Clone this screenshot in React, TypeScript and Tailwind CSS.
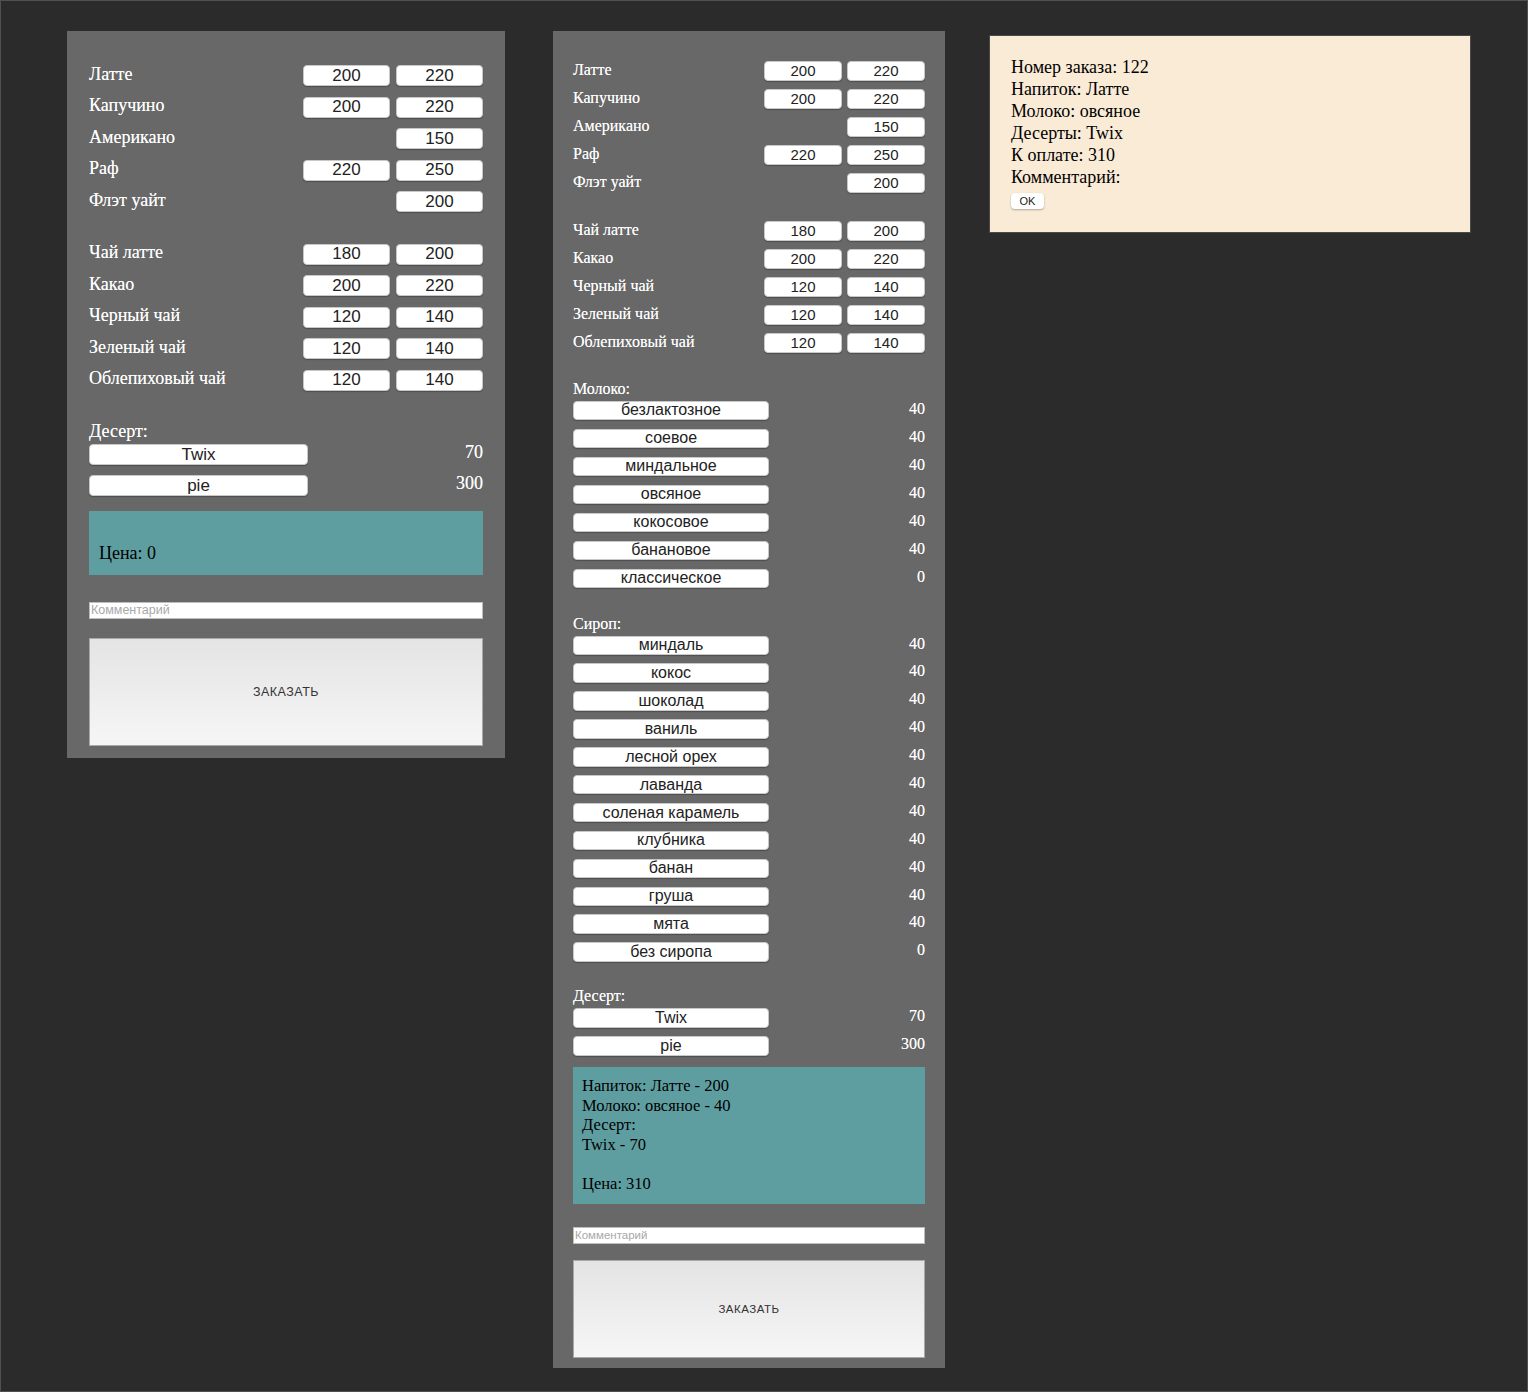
import React from "react";

const serif = "font-['Liberation_Serif',_'Times_New_Roman',_serif]";
const sans = "font-['Liberation_Sans',_Arial,_sans-serif]";
const glow = "[text-shadow:0_0_0.6px_rgba(255,255,255,0.7)]";

type Drink = { name: string; prices: number[] };

const coffee: Drink[] = [
  { name: "Латте", prices: [200, 220] },
  { name: "Капучино", prices: [200, 220] },
  { name: "Американо", prices: [150] },
  { name: "Раф", prices: [220, 250] },
  { name: "Флэт уайт", prices: [200] },
];

const tea: Drink[] = [
  { name: "Чай латте", prices: [180, 200] },
  { name: "Какао", prices: [200, 220] },
  { name: "Черный чай", prices: [120, 140] },
  { name: "Зеленый чай", prices: [120, 140] },
  { name: "Облепиховый чай", prices: [120, 140] },
];

const milk = [
  { name: "безлактозное", price: 40 },
  { name: "соевое", price: 40 },
  { name: "миндальное", price: 40 },
  { name: "овсяное", price: 40 },
  { name: "кокосовое", price: 40 },
  { name: "банановое", price: 40 },
  { name: "классическое", price: 0 },
];

const syrup = [
  { name: "миндаль", price: 40 },
  { name: "кокос", price: 40 },
  { name: "шоколад", price: 40 },
  { name: "ваниль", price: 40 },
  { name: "лесной орех", price: 40 },
  { name: "лаванда", price: 40 },
  { name: "соленая карамель", price: 40 },
  { name: "клубника", price: 40 },
  { name: "банан", price: 40 },
  { name: "груша", price: 40 },
  { name: "мята", price: 40 },
  { name: "без сиропа", price: 0 },
];

const desserts = [
  { name: "Twix", price: 70 },
  { name: "pie", price: 300 },
];

const pill =
  "bg-white rounded-[4px] border border-[#c8c8c8] shadow-[0_1px_1px_rgba(0,0,0,0.25)] text-[#222] flex items-center justify-center";

// big panel (left)
const BigRow = ({ d }: { d: Drink }) => (
  <div className="flex items-center h-[21px]">
    <span className={`flex-1 text-white text-[18px] leading-[21px] -mt-[3px] ${glow} ${serif}`}>{d.name}</span>
    <div className="flex gap-[6px]">
      {d.prices.length < 2 && <div className="w-[87px]" />}
      {d.prices.map((p, i) => (
        <button key={i} className={`${pill} w-[87px] h-[21px] text-[17px] ${sans}`}>
          {p}
        </button>
      ))}
    </div>
  </div>
);

const BigItem = ({ name, price }: { name: string; price: number }) => (
  <div className="flex items-start h-[21px]">
    <button className={`${pill} w-[219px] h-[21px] text-[17px] ${sans}`}>{name}</button>
    <span className={`flex-1 text-right text-white text-[18px] leading-[21px] -mt-[2px] ${glow} ${serif}`}>{price}</span>
  </div>
);

// small panel (middle)
const SmallRow = ({ d }: { d: Drink }) => (
  <div className="flex items-center h-[19.5px]">
    <span className={`flex-1 text-white text-[16px] leading-[18px] -mt-[2px] ${glow} ${serif}`}>{d.name}</span>
    <div className="flex gap-[5px]">
      {d.prices.length < 2 && <div className="w-[78px]" />}
      {d.prices.map((p, i) => (
        <button key={i} className={`${pill} w-[78px] h-[19.5px] text-[15px] ${sans}`}>
          {p}
        </button>
      ))}
    </div>
  </div>
);

const SmallItem = ({ name, price }: { name: string; price: number }) => (
  <div className="flex items-start h-[19.5px]">
    <button className={`${pill} w-[196px] h-[19.5px] text-[16px] ${sans}`}>{name}</button>
    <span className={`flex-1 text-right text-white text-[16px] leading-[18px] -mt-[1px] ${glow} ${serif}`}>{price}</span>
  </div>
);

const OrderButton = ({ h, size }: { h: string; size: string }) => (
  <button
    className={`w-full ${h} border border-[#a9a9a9] bg-gradient-to-b from-[#e4e4e4] to-[#f6f6f6] text-[#333] uppercase tracking-[0.5px] ${size} ${sans}`}
  >
    Заказать
  </button>
);

export default function App() {
  return (
    <div className="min-h-[1392px] bg-[#2b2b2b] border border-[#505050] flex items-start">
      {/* Panel 1 */}
      <div className="ml-[66px] mt-[30px] w-[438px] bg-[#686868] px-[22px] pt-[34px] pb-[12px]">
        <div className="flex flex-col gap-[10.5px]">
          {coffee.map((d) => (
            <BigRow key={d.name} d={d} />
          ))}
        </div>
        <div className="flex flex-col gap-[10.5px] mt-[31.5px]">
          {tea.map((d) => (
            <BigRow key={d.name} d={d} />
          ))}
        </div>
        <div className={`mt-[30px] mb-[2.5px] text-white text-[18px] leading-[21px] ${glow} ${serif}`}>Десерт:</div>
        <div className="flex flex-col gap-[10px]">
          {desserts.map((d) => (
            <BigItem key={d.name} name={d.name} price={d.price} />
          ))}
        </div>
        <div className={`mt-[15px] h-[64px] bg-[#5f9ea0] px-[10px] pt-[32px] text-black text-[18px] leading-[20px] ${serif}`}>
          Цена: 0
        </div>
        <input
          placeholder="Комментарий"
          className={`mt-[27px] w-full h-[17px] bg-white border border-[#bdbdbd] px-[1px] text-[12.5px] placeholder:text-[#a8a8a8] ${sans}`}
        />
        <div className="mt-[18px]">
          <OrderButton h="h-[108px]" size="text-[12.5px]" />
        </div>
      </div>

      {/* Panel 2 */}
      <div className="ml-[48px] mt-[30px] w-[392px] bg-[#686868] px-[20px] pt-[30px] pb-[10px]">
        <div className="flex flex-col gap-[8.5px]">
          {coffee.map((d) => (
            <SmallRow key={d.name} d={d} />
          ))}
        </div>
        <div className="flex flex-col gap-[8.5px] mt-[28.5px]">
          {tea.map((d) => (
            <SmallRow key={d.name} d={d} />
          ))}
        </div>
        <div className={`mt-[27px] mb-[3px] text-white text-[16px] leading-[18px] ${glow} ${serif}`}>Молоко:</div>
        <div className="flex flex-col gap-[8.5px]">
          {milk.map((m) => (
            <SmallItem key={m.name} name={m.name} price={m.price} />
          ))}
        </div>
        <div className={`mt-[26.5px] mb-[3px] text-white text-[16px] leading-[18px] ${glow} ${serif}`}>Сироп:</div>
        <div className="flex flex-col gap-[8.4px]">
          {syrup.map((m) => (
            <SmallItem key={m.name} name={m.name} price={m.price} />
          ))}
        </div>
        <div className={`mt-[25.5px] mb-[3px] text-white text-[16px] leading-[18px] ${glow} ${serif}`}>Десерт:</div>
        <div className="flex flex-col gap-[8.5px]">
          {desserts.map((d) => (
            <SmallItem key={d.name} name={d.name} price={d.price} />
          ))}
        </div>
        <div className={`mt-[11.5px] h-[136.5px] bg-[#5f9ea0] px-[9px] pt-[9px] text-black text-[16.5px] leading-[19.6px] ${serif}`}>
          <div>Напиток: Латте - 200</div>
          <div>Молоко: овсяное - 40</div>
          <div>Десерт:</div>
          <div>Twix - 70</div>
          <div className="h-[19.6px]" />
          <div>Цена: 310</div>
        </div>
        <input
          placeholder="Комментарий"
          className={`mt-[23.5px] w-full h-[17px] bg-white border border-[#bdbdbd] px-[1px] text-[11.5px] placeholder:text-[#a8a8a8] ${sans}`}
        />
        <div className="mt-[15px]">
          <OrderButton h="h-[98px]" size="text-[11.5px]" />
        </div>
      </div>

      {/* Panel 3 - order receipt */}
      <div
        className={`ml-[44px] mt-[34px] w-[482px] h-[198px] bg-[#faebd7] border border-[#4a4a4a] pl-[21px] pt-[20px] text-black text-[18px] leading-[22px] ${serif}`}
      >
        <div>Номер заказа: 122</div>
        <div>Напиток: Латте</div>
        <div>Молоко: овсяное</div>
        <div>Десерты: Twix</div>
        <div>К оплате: 310</div>
        <div>Комментарий:</div>
        <button
          className={`mt-[5px] w-[33px] h-[16px] bg-white rounded-[4px] shadow-[0_1px_2px_rgba(0,0,0,0.3)] text-[11px] leading-[16px] text-[#222] ${sans}`}
        >
          OK
        </button>
      </div>
    </div>
  );
}
